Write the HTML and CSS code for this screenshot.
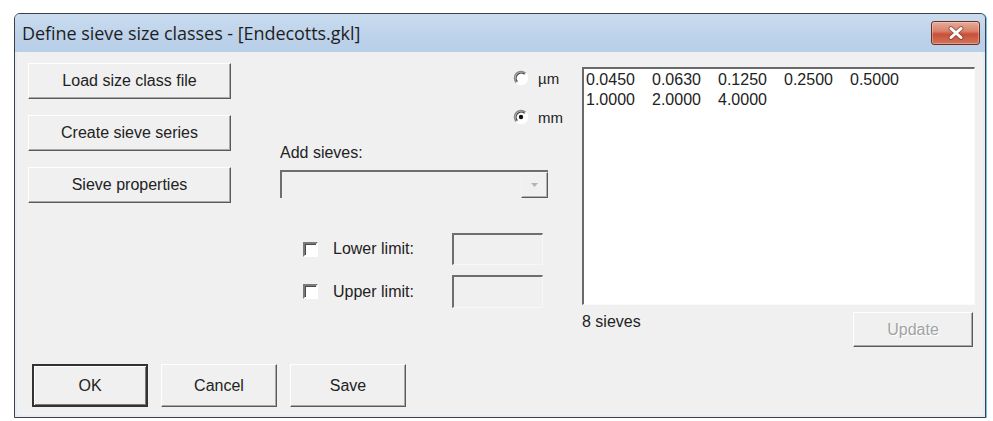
FILE: index.html
```html
<!DOCTYPE html>
<html lang="en">
<head>
<meta charset="utf-8">
<title>Define sieve size classes</title>
<link rel="stylesheet" href="styles.css">
</head>
<body>
<div class="window">
  <div class="titlebar">
    <span class="title">Define sieve size classes - [Endecotts.gkl]</span>
    <button class="close" aria-label="Close">
      <svg width="20" height="14" viewBox="0 0 20 14">
        <path d="M5 2.5 L15 11.5 M15 2.5 L5 11.5" stroke="#7a3324" stroke-width="5" stroke-linecap="round" fill="none" opacity="0.55"/>
        <path d="M5 2.5 L15 11.5 M15 2.5 L5 11.5" stroke="#ffffff" stroke-width="3" stroke-linecap="round" fill="none"/>
      </svg>
    </button>
  </div>

  <div class="client">
    <div class="main">
      <div class="col-left">
        <button class="btn side">Load size class file</button>
        <button class="btn side">Create sieve series</button>
        <button class="btn side">Sieve properties</button>
      </div>

      <div class="col-mid">
        <div class="units">
          <label class="radio">
            <svg class="radio-mark" width="16" height="16" viewBox="0 0 16 16">
              <circle cx="8" cy="8" r="6.5" fill="#ffffff"/>
              <path d="M3.4 12.6 A6.5 6.5 0 0 1 12.6 3.4" stroke="#8a8a8a" stroke-width="1.5" fill="none"/>
              <path d="M4.4 11.6 A5.1 5.1 0 0 1 11.6 4.4" stroke="#3c3c3c" stroke-width="1.2" fill="none"/>
              <path d="M12.6 3.4 A6.5 6.5 0 0 1 3.4 12.6" stroke="#ffffff" stroke-width="1.5" fill="none"/>
            </svg>
            <span>µm</span>
          </label>
          <label class="radio">
            <svg class="radio-mark" width="16" height="16" viewBox="0 0 16 16">
              <circle cx="8" cy="8" r="6.5" fill="#ffffff"/>
              <path d="M3.4 12.6 A6.5 6.5 0 0 1 12.6 3.4" stroke="#8a8a8a" stroke-width="1.5" fill="none"/>
              <path d="M4.4 11.6 A5.1 5.1 0 0 1 11.6 4.4" stroke="#3c3c3c" stroke-width="1.2" fill="none"/>
              <path d="M12.6 3.4 A6.5 6.5 0 0 1 3.4 12.6" stroke="#ffffff" stroke-width="1.5" fill="none"/>
              <circle cx="8" cy="8" r="2.2" fill="#111111"/>
            </svg>
            <span>mm</span>
          </label>
        </div>

        <div class="add-label">Add sieves:</div>
        <div class="combo">
          <span class="combo-btn">
            <svg width="7" height="4" viewBox="0 0 7 4"><path d="M0 0 H7 L3.5 4 Z" fill="#b4b4b4"/></svg>
          </span>
        </div>

        <div class="limits">
          <div class="limit-row lower">
            <span class="check"></span>
            <span class="limit-label">Lower limit:</span>
            <span class="field"></span>
          </div>
          <div class="limit-row upper">
            <span class="check"></span>
            <span class="limit-label">Upper limit:</span>
            <span class="field"></span>
          </div>
        </div>
      </div>

      <div class="col-right">
        <div class="listbox">
          <div class="list-row"><span>0.0450</span><span>0.0630</span><span>0.1250</span><span>0.2500</span><span>0.5000</span></div>
          <div class="list-row"><span>1.0000</span><span>2.0000</span><span>4.0000</span></div>
        </div>
        <div class="list-foot">
          <span class="count">8 sieves</span>
          <button class="btn update" disabled>Update</button>
        </div>
      </div>
    </div>

    <div class="actions">
      <button class="btn action default">OK</button>
      <button class="btn action">Cancel</button>
      <button class="btn action">Save</button>
    </div>
  </div>
</div>
</body>
</html>
```

FILE: styles.css
```css
* {
  box-sizing: border-box;
}

html,
body {
  margin: 0;
}

body {
  width: 993px;
  height: 421px;
  overflow: hidden;
  background: #ffffff;
  font-family: "Liberation Sans", Arial, sans-serif;
  font-size: 16px;
  color: #222222;
}

/* Dialog frame */
.window {
  margin: 13px 0 0 14px;
  width: 972px;
  height: 405px;
  display: flex;
  flex-direction: column;
  border: 1px solid #3e4046;
  border-radius: 6px 6px 0 0;
  background: #e4ecf5;
  box-shadow: 1px 0 0 #74c6ee;
}

.titlebar {
  height: 38px;
  flex: none;
  display: flex;
  align-items: center;
  justify-content: space-between;
  padding: 0 5px 0 7px;
  border-radius: 5px 5px 0 0;
  background: linear-gradient(180deg, #cadcef 0%, #bcd2ea 60%, #b8cfe8 100%);
}

.title {
  font-family: "Open Sans", "Noto Sans", sans-serif;
  font-size: 18px;
  color: #1e1e1e;
  letter-spacing: -0.05px;
}

.close {
  width: 49px;
  height: 24px;
  padding: 0;
  display: flex;
  align-items: center;
  justify-content: center;
  border: 1px solid #6f2c22;
  border-radius: 3px;
  background: linear-gradient(180deg, #e7ab9a 0%, #d98169 42%, #c8503a 55%, #d2745a 100%);
  box-shadow: inset 0 0 0 1px rgba(255, 255, 255, 0.3);
}

/* Client area */
.client {
  flex: 1;
  margin: 0 2px 2px;
  padding: 11px 8px 8px 11px;
  display: flex;
  flex-direction: column;
  background: #f0f0f0;
}

.main {
  display: flex;
}

/* Raised push button */
.btn {
  font: inherit;
  color: inherit;
  padding: 0;
  display: flex;
  align-items: center;
  justify-content: center;
  background: #f0f0f0;
  border: 1px solid;
  border-color: #ffffff #5a5a5a #5a5a5a #ffffff;
  box-shadow: inset -1px -1px 0 #a9a9a9;
}

.col-left {
  width: 203px;
  display: flex;
  flex-direction: column;
  gap: 16px;
}

.side {
  height: 36px;
}

/* Middle column: units, sieve picker, limits */
.col-mid {
  width: 285px;
  margin-left: 49px;
  display: flex;
  flex-direction: column;
}

.units {
  align-self: flex-end;
  margin-top: 6px;
  margin-right: 2px;
  display: flex;
  flex-direction: column;
  gap: 21px;
}

.radio {
  height: 18px;
  display: flex;
  align-items: center;
  gap: 9px;
  font-size: 15px;
}

.radio-mark {
  flex: none;
}

.add-label {
  margin-top: 18px;
  height: 18px;
  line-height: 18px;
}

.combo {
  margin-top: 8px;
  width: 268px;
  height: 28px;
  display: flex;
  justify-content: flex-end;
  border-style: solid;
  border-width: 2px 0 0 2px;
  border-color: #6e6e6e;
  background: #f0f0f0;
}

.combo-btn {
  width: 27px;
  height: 100%;
  display: flex;
  align-items: center;
  justify-content: center;
  border: 1px solid;
  border-color: #f4f4f4 #5a5a5a #5a5a5a #f4f4f4;
  box-shadow: inset -1px -1px 0 #b0b0b0;
}

.limits {
  margin-top: 35px;
  display: flex;
  flex-direction: column;
  gap: 10px;
}

.limit-row {
  display: flex;
  align-items: center;
}

.limit-row.lower {
  height: 32px;
}

.limit-row.upper {
  height: 33px;
}

.check {
  width: 15px;
  height: 15px;
  margin-left: 23px;
  margin-right: 15px;
  background: #ffffff;
  border: 2px solid;
  border-color: #7a7a7a #ffffff #ffffff #7a7a7a;
  box-shadow: inset 1px 1px 0 #4a4a4a;
}

.limit-label {
  width: 119px;
}

.field {
  width: 91px;
  height: 100%;
  border-style: solid;
  border-width: 2px 1px 1px 2px;
  border-color: #6e6e6e #f7f7f7 #f7f7f7 #6e6e6e;
  background: #f0f0f0;
}

/* Right column: sieve list */
.col-right {
  width: 393px;
  margin-left: 17px;
  display: flex;
  flex-direction: column;
}

.listbox {
  margin-top: 4px;
  height: 238px;
  padding: 1px 0 0 2px;
  background: #ffffff;
  border-style: solid;
  border-width: 2px 1px 1px 2px;
  border-color: #6a6a6a #fbfbfb #fbfbfb #6a6a6a;
}

.list-row {
  display: flex;
  height: 20px;
  line-height: 20px;
}

.list-row span {
  width: 66px;
}

.list-foot {
  margin-top: 7px;
  display: flex;
  align-items: flex-start;
  justify-content: space-between;
}

.count {
  margin-top: 1px;
  line-height: 18px;
}

.update {
  width: 120px;
  height: 35px;
  margin-right: 2px;
  color: #a3a3a3;
  text-shadow: 1px 1px 0 #ffffff;
}

/* Dialog buttons */
.actions {
  margin-top: 17px;
  padding-left: 4px;
  display: flex;
  gap: 13px;
}

.action {
  width: 116px;
  height: 43px;
}

.action.default {
  border: 2px solid #333333;
  box-shadow: inset 1px 1px 0 #ffffff, inset -1px -1px 0 #7a7a7a;
}
```
